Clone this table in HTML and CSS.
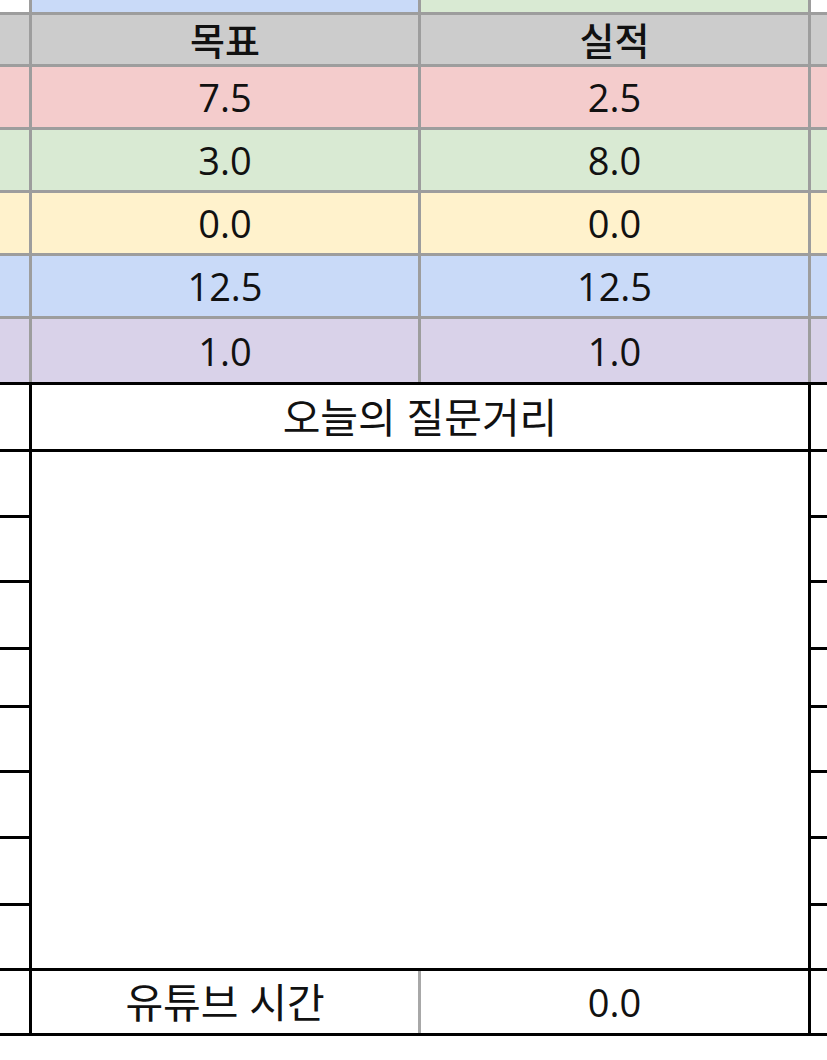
FILE: index.html
```html
<!DOCTYPE html>
<html lang="ko">
<head>
<meta charset="utf-8">
<link rel="stylesheet" href="styles.css">
</head>
<body>
<div class="sheet">
  <div class="colored">
    <div class="c white"></div><div class="c blue"></div><div class="c green"></div><div class="c white"></div>
    <div class="c gray"></div><div class="c gray head">목표</div><div class="c gray head">실적</div><div class="c gray"></div>
    <div class="c red"></div><div class="c red">7.5</div><div class="c red">2.5</div><div class="c red"></div>
    <div class="c green"></div><div class="c green">3.0</div><div class="c green">8.0</div><div class="c green"></div>
    <div class="c yellow"></div><div class="c yellow">0.0</div><div class="c yellow">0.0</div><div class="c yellow"></div>
    <div class="c blue"></div><div class="c blue">12.5</div><div class="c blue">12.5</div><div class="c blue"></div>
    <div class="c purple"></div><div class="c purple">1.0</div><div class="c purple">1.0</div><div class="c purple"></div>
  </div>
  <div class="lower">
    <div class="side r1"></div><div class="q ko">오늘의 질문거리</div><div class="side r1 right"></div>
    <div class="side r2"></div><div class="box"></div><div class="side r2 right"></div>
    <div class="side r3"></div><div class="side r3 right"></div>
    <div class="side r4"></div><div class="side r4 right"></div>
    <div class="side r5"></div><div class="side r5 right"></div>
    <div class="side r6"></div><div class="side r6 right"></div>
    <div class="side r7"></div><div class="side r7 right"></div>
    <div class="side r8"></div><div class="side r8 right"></div>
    <div class="side r9"></div><div class="side r9 right"></div>
    <div class="side r10"></div>
    <div class="yt"><div class="yt-cell ko">유튜브 시간</div><div class="yt-cell val">0.0</div></div>
    <div class="side r10 right"></div>
  </div>
</div>
</body>
</html>
```
FILE: styles.css
```css
html, body {
  margin: 0;
  padding: 0;
  background: #ffffff;
}
body {
  width: 827px;
  height: 1060px;
  overflow: hidden;
  font-family: "Open Sans", "Noto Sans CJK KR", sans-serif;
  font-size: 38px;
  color: #111;
}
.sheet {
  width: 827px;
}
.colored {
  display: grid;
  grid-template-columns: 29px 386px 387px 16px;
  grid-template-rows: 12px 49px 60px 60px 60px 60px 63px;
  gap: 3px;
  background: #9d9d9d;
}
.c {
  display: flex;
  align-items: center;
  justify-content: center;
  line-height: 1;
}
.head { font-weight: 500; font-size: 38px; }
.ko { font-size: 41px; }
.white { background: #ffffff; }
.gray { background: #cccccc; }
.red { background: #f4cccc; }
.green { background: #d9ead3; }
.yellow { background: #fff2cc; }
.blue { background: #c9daf8; }
.purple { background: #d9d2e9; }

.lower {
  display: grid;
  grid-template-columns: 29px 776px 16px;
  grid-template-rows: 64px 63px 62px 64px 55px 62px 63px 64px 62px 62px;
  column-gap: 3px;
  row-gap: 3px;
  padding: 3px 0;
  background: #000;
}
.side { background: #fff; grid-column: 1; }
.side.right { grid-column: 3; }
.r1 { grid-row: 1; }
.r2 { grid-row: 2; }
.r3 { grid-row: 3; }
.r4 { grid-row: 4; }
.r5 { grid-row: 5; }
.r6 { grid-row: 6; }
.r7 { grid-row: 7; }
.r8 { grid-row: 8; }
.r9 { grid-row: 9; }
.r10 { grid-row: 10; }
.q {
  grid-column: 2;
  grid-row: 1;
  background: #fff;
  display: flex;
  align-items: center;
  justify-content: center;
  line-height: 1;
}
.box {
  grid-column: 2;
  grid-row: 2 / 10;
  background: #fff;
}
.yt {
  grid-column: 2;
  grid-row: 10;
  display: grid;
  grid-template-columns: 386px 387px;
  gap: 3px;
  background: #a8a8a8;
}
.yt-cell {
  background: #fff;
  display: flex;
  align-items: center;
  justify-content: center;
  line-height: 1;
}
```
